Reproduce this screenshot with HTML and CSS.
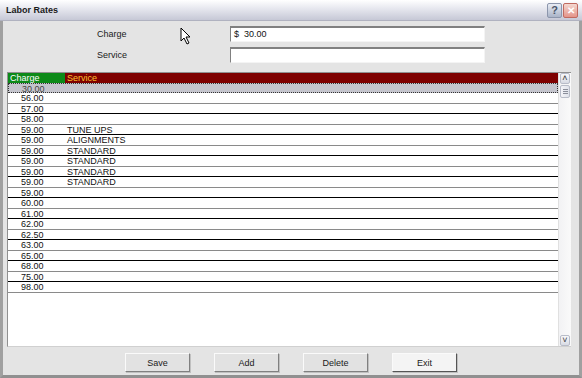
FILE: index.html
```html
<!DOCTYPE html>
<html lang="en">
<head>
  <meta charset="UTF-8" />
  <title>Labor Rates</title>
  <link rel="stylesheet" href="styles.css">
</head>
<body>

  <div class="window">
    <div class="titlebar">
      <span class="title">Labor Rates</span>
      <div class="title-buttons">
        <span class="tbtn help">?</span>
        <span class="tbtn close">&#x2715;</span>
      </div>
    </div>

    <div class="form">
      <div class="form-row">
        <label class="form-label">Charge</label>
        <div class="input">$&nbsp;&nbsp;30.00</div>
      </div>
      <div class="form-row">
        <label class="form-label">Service</label>
        <div class="input"></div>
      </div>
    </div>

    <div class="grid">
      <div class="grid-body">
        <div class="grid-head">
          <div class="hcell charge">Charge</div>
          <div class="hcell service">Service</div>
        </div>
        <div class="grid-rows">
          <div class="row selected"><span class="c">30.00</span><span class="s"></span></div>
          <div class="row"><span class="c">56.00</span><span class="s"></span></div>
          <div class="row"><span class="c">57.00</span><span class="s"></span></div>
          <div class="row"><span class="c">58.00</span><span class="s"></span></div>
          <div class="row"><span class="c">59.00</span><span class="s">TUNE UPS</span></div>
          <div class="row"><span class="c">59.00</span><span class="s">ALIGNMENTS</span></div>
          <div class="row"><span class="c">59.00</span><span class="s">STANDARD</span></div>
          <div class="row"><span class="c">59.00</span><span class="s">STANDARD</span></div>
          <div class="row"><span class="c">59.00</span><span class="s">STANDARD</span></div>
          <div class="row"><span class="c">59.00</span><span class="s">STANDARD</span></div>
          <div class="row"><span class="c">59.00</span><span class="s"></span></div>
          <div class="row"><span class="c">60.00</span><span class="s"></span></div>
          <div class="row"><span class="c">61.00</span><span class="s"></span></div>
          <div class="row"><span class="c">62.00</span><span class="s"></span></div>
          <div class="row"><span class="c">62.50</span><span class="s"></span></div>
          <div class="row"><span class="c">63.00</span><span class="s"></span></div>
          <div class="row"><span class="c">65.00</span><span class="s"></span></div>
          <div class="row"><span class="c">68.00</span><span class="s"></span></div>
          <div class="row"><span class="c">75.00</span><span class="s"></span></div>
          <div class="row"><span class="c">98.00</span><span class="s"></span></div>
        </div>
      </div>
      <div class="scrollbar">
        <div class="sb-btn">&#x2C4;</div>
        <div class="sb-thumb"><span></span><span></span><span></span></div>
        <div class="sb-track"></div>
        <div class="sb-btn">&#x2C5;</div>
      </div>
    </div>

    <div class="buttons">
      <button class="btn">Save</button>
      <button class="btn">Add</button>
      <button class="btn">Delete</button>
      <button class="btn default">Exit</button>
    </div>

    <!-- mouse pointer -->
    <svg class="cursor" width="12" height="18" viewBox="0 0 12 18">
      <path d="M1 1 L1 14 L4 11 L7 17 L9 16 L6 10 L10 10 Z" fill="#fff" stroke="#000" stroke-width="1"/>
    </svg>
  </div>

</body>
</html>
```

FILE: styles.css
```css
body {
  margin: 0;
  padding: 0;
  font-family: 'Liberation Sans', Arial, sans-serif;
  font-size: 9px;
  background: #e4e4e4;
}

.window {
  position: relative;
  width: 582px;
  height: 378px;
  box-sizing: border-box;
  background: #e4e4e4;
  border-left: 3px solid #a0a0a0;
  border-right: 3px solid #a0a0a0;
  border-bottom: 3px solid #909090;
  display: flex;
  flex-direction: column;
}

.titlebar {
  height: 21px;
  box-sizing: border-box;
  margin: 0 -3px;
  padding: 0 4px 0 6px;
  display: flex;
  align-items: center;
  justify-content: space-between;
  background: linear-gradient(#ffffff, #e8e9f0 40%, #c6c8d6);
  border-bottom: 1px solid #b0b2c0;
}

.title {
  font-weight: bold;
  font-size: 9px;
  color: #1a1a1a;
}

.title-buttons {
  display: flex;
  gap: 1px;
}

.tbtn {
  width: 15px;
  height: 15px;
  box-sizing: border-box;
  border-radius: 2px;
  display: flex;
  align-items: center;
  justify-content: center;
  font-weight: bold;
  font-size: 11px;
}

.tbtn.help {
  background: linear-gradient(#e8ecf4, #aab4c8);
  border: 1px solid #8c96ac;
  color: #4a5468;
}

.tbtn.close {
  background: linear-gradient(#f4d8d0, #e4948a);
  border: 1px solid #c06a60;
  color: #fff;
  font-size: 10px;
}

.form {
  padding: 5px 0 0 94px;
  display: flex;
  flex-direction: column;
  gap: 5px;
}

.form-row {
  display: flex;
  align-items: center;
  height: 16px;
}

.form-label {
  width: 133px;
  color: #1a1a1a;
}

.input {
  width: 255px;
  height: 16px;
  box-sizing: border-box;
  background: #fff;
  border-top: 2px solid #808080;
  border-left: 1px solid #808080;
  border-right: 1px solid #f4f4f4;
  border-bottom: 1px solid #f4f4f4;
  padding-left: 3px;
  line-height: 12px;
  color: #111;
}

.grid {
  margin: 9px 8px 0 4px;
  height: 273px;
  display: flex;
  background: #fff;
  border-top: 1px solid #909090;
  border-left: 1px solid #909090;
  border-bottom: 1px solid #d0d0d0;
}

.grid-body {
  flex: 1;
  display: flex;
  flex-direction: column;
}

.grid-head {
  display: flex;
  height: 10px;
  line-height: 10px;
}

.hcell {
  padding-left: 2px;
  box-sizing: border-box;
}

.hcell.charge {
  width: 57px;
  background: #0c8a18;
  color: #fff;
}

.hcell.service {
  flex: 1;
  background: #7e0000;
  color: #ffc030;
}

.row {
  display: flex;
  height: 10px;
  line-height: 10px;
  box-sizing: border-box;
  border-bottom: 1px solid #000;
  color: #111;
}

.row:nth-child(even) {
  height: 11px;
  border-bottom-color: #8a8a8a;
}

.row .c {
  width: 57px;
  padding-left: 13px;
  box-sizing: border-box;
}

.row .s {
  flex: 1;
  padding-left: 2px;
}

.row.selected {
  background: #c4c4cc;
  border: 1px dotted #333;
  color: #444;
}

.scrollbar {
  width: 12px;
  display: flex;
  flex-direction: column;
  background: linear-gradient(90deg, #f2f2f4, #fafafa);
  border-left: 1px solid #e0e0e0;
}

.sb-btn {
  height: 11px;
  margin: 0 1px;
  box-sizing: border-box;
  border: 1px solid #b8bcc8;
  border-radius: 2px;
  background: linear-gradient(#f8f8fa, #d8dbe4);
  font-size: 9px;
  line-height: 9px;
  text-align: center;
  color: #333;
}

.sb-thumb {
  height: 13px;
  margin: 1px 1px 0;
  box-sizing: border-box;
  border: 1px solid #b8bcc8;
  border-radius: 2px;
  background: linear-gradient(90deg, #f4f4f8, #dfe2ea);
  display: flex;
  flex-direction: column;
  justify-content: center;
  align-items: center;
  gap: 1px;
}

.sb-thumb span {
  width: 5px;
  height: 1px;
  background: #8a8e9a;
}

.sb-track {
  flex: 1;
}

.buttons {
  display: flex;
  gap: 24px;
  padding: 6px 0 0 122px;
}

.btn {
  width: 65px;
  height: 19px;
  padding: 0;
  font-family: 'Liberation Sans', Arial, sans-serif;
  font-size: 9px;
  color: #1a1a1a;
  background: #e2e2e2;
  border-top: 1px solid #fafafa;
  border-left: 1px solid #fafafa;
  border-right: 1px solid #808080;
  border-bottom: 1px solid #808080;
  box-shadow: 1px 1px 0 #c0c0c0;
}

.btn.default {
  background: #f4f4f4;
  border-right-color: #555;
  border-bottom-color: #555;
}

.cursor {
  position: absolute;
  left: 177px;
  top: 27px;
}
```
